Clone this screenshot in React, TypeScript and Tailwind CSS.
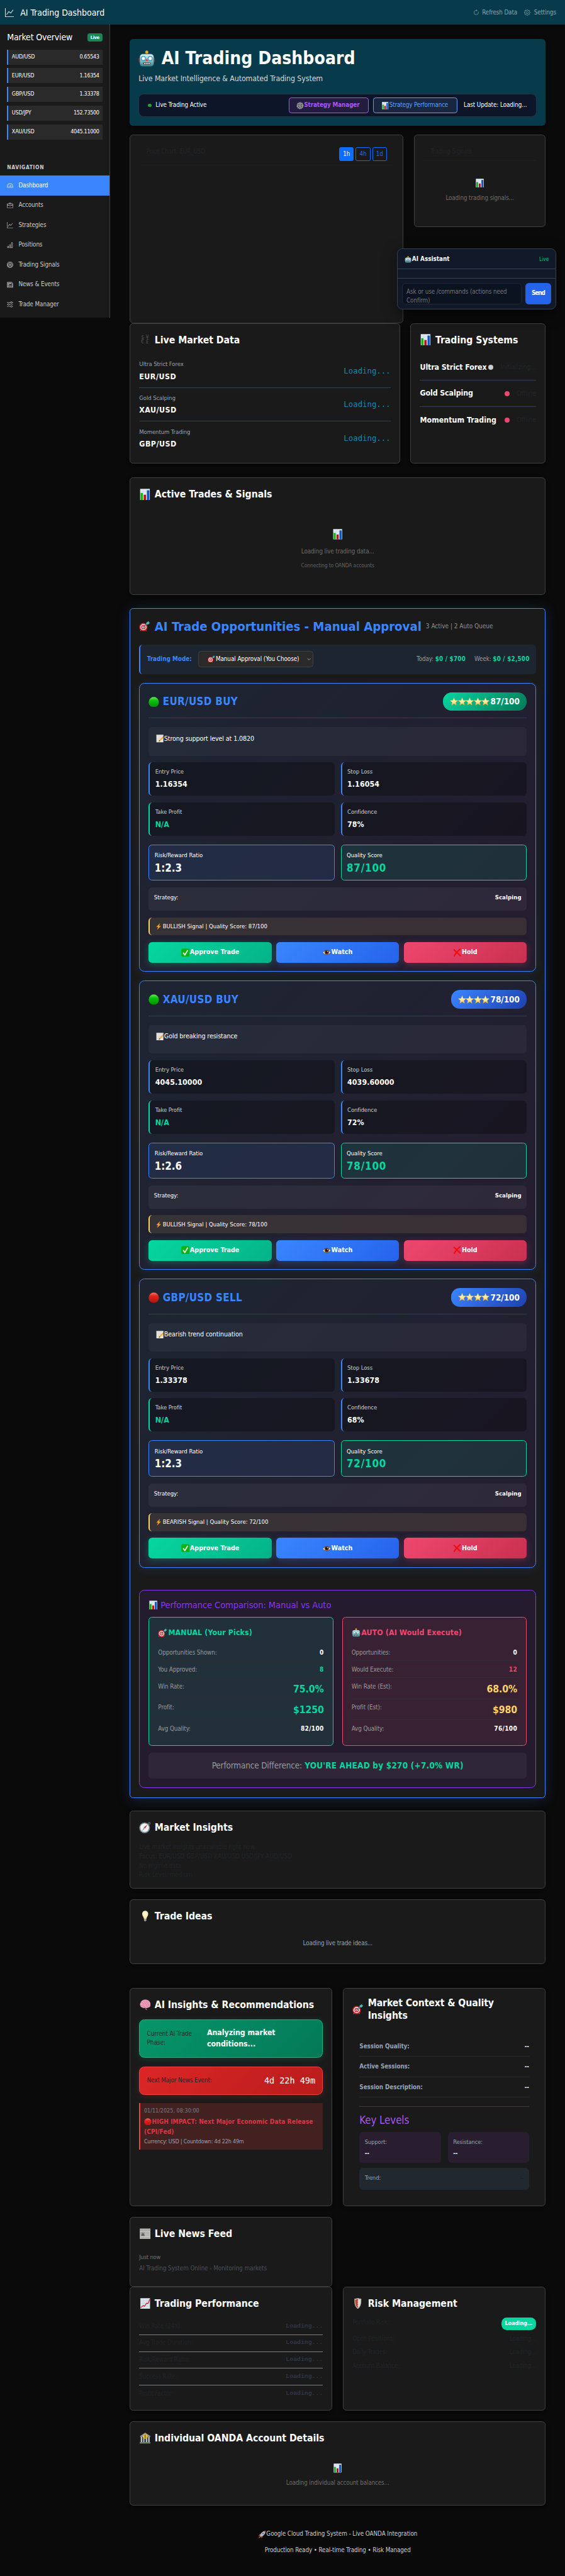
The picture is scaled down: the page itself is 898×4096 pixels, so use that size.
import type { ReactNode } from "react";
import {
  BsArrowClockwise,
  BsBarChart,
  BsBriefcase,
  BsBullseye,
  BsGear,
  BsGraphUp,
  BsNewspaper,
  BsSliders,
  BsSpeedometer2,
} from "react-icons/bs";

type IconProps = { className?: string };

function Svg({ className = "", children }: { className?: string; children: ReactNode }) {
  return (
    <svg viewBox="0 0 32 32" className={"shrink-0 " + className} fill="none">
      {children}
    </svg>
  );
}

function Robot({ className }: IconProps) {
  return (
    <Svg className={className}>
      <defs>
        <linearGradient id="robotFace" x1="0" y1="0" x2="0" y2="1">
          <stop offset="0" stopColor="#dff3f2" />
          <stop offset="0.5" stopColor="#8fc3c8" />
          <stop offset="1" stopColor="#2f7f88" />
        </linearGradient>
      </defs>
      <rect x="0.5" y="14" width="4" height="9" rx="2" fill="#c8202c" />
      <rect x="27.5" y="14" width="4" height="9" rx="2" fill="#c8202c" />
      <rect x="13" y="4" width="6" height="5" rx="1" fill="#4b6a9e" />
      <circle cx="16" cy="3.4" r="3" fill="#f7a61c" />
      <rect x="2.5" y="7" width="27" height="24" rx="6" fill="url(#robotFace)" stroke="#1d4b55" strokeWidth="0.8" />
      <circle cx="9.5" cy="15.5" r="4" fill="#fff" stroke="#1f9fd0" strokeWidth="1.6" />
      <circle cx="22.5" cy="15.5" r="4" fill="#fff" stroke="#1f9fd0" strokeWidth="1.6" />
      <path d="M16 15.5l2.8 5h-5.6z" fill="#d8453b" />
      <rect x="9.5" y="23" width="13" height="4.4" rx="1.6" fill="#3a2320" />
      <path d="M11 23.8h1.8v2.8H11zM14 23.8h1.8v2.8H14zM17 23.8h1.8v2.8H17zM20 23.8h1.6v2.8H20z" fill="#fff" />
    </Svg>
  );
}

function Cog({ className }: IconProps) {
  return (
    <Svg className={className}>
      <circle cx="16" cy="16" r="13.4" stroke="#9a9a9a" strokeWidth="4" strokeDasharray="3.4 3.6" />
      <circle cx="16" cy="16" r="10.4" stroke="#b9b9b9" strokeWidth="3.4" />
      <path d="M16 6v20M6 16h20M9 9l14 14M23 9L9 23" stroke="#8d8d8d" strokeWidth="1.8" />
      <circle cx="16" cy="16" r="5" fill="#6a6a6a" stroke="#c9c9c9" strokeWidth="2" />
    </Svg>
  );
}

function BarsEmoji({ className }: IconProps) {
  return (
    <Svg className={className}>
      <rect x="3" y="0.5" width="27" height="31" fill="#dfe9f3" />
      <path d="M3 8h27M3 15.500h27M3 23h27M11.500 .5v31M21 .5v31" stroke="#c3cfdb" strokeWidth="0.7" />
      <rect x="4.500" y="12" width="6" height="19.500" fill="#12b312" />
      <rect x="13" y="17" width="6.500" height="14.500" fill="#c40f12" />
      <rect x="22" y="4.500" width="6.500" height="27" fill="#0f55bd" />
    </Svg>
  );
}

function Target({ className }: IconProps) {
  return (
    <Svg className={className}>
      <path d="M5.500 25.500l-2 4.500M19 26l2 4" stroke="#b8791d" strokeWidth="2" />
      <circle cx="12.500" cy="18.500" r="12" fill="#cf1f26" />
      <circle cx="12.500" cy="18.500" r="9" fill="#fbf5f3" />
      <circle cx="12.500" cy="18.500" r="6.300" fill="#cf1f26" />
      <circle cx="12.500" cy="18.500" r="3.600" fill="#fbf5f3" />
      <circle cx="12.500" cy="18.500" r="1.600" fill="#cf1f26" />
      <path d="M13 18L26 6" stroke="#2c7f8a" strokeWidth="2" />
      <path d="M20.500 11l.5-5 7-5 .5 3.500 3.500.8-5.500 5.700z" fill="#4cb5be" />
    </Svg>
  );
}

function Ball({ className, tone }: IconProps & { tone: "green" | "red" }) {
  const green = tone === "green";
  const id = green ? "ballGreen" : "ballRed";
  return (
    <Svg className={className}>
      <defs>
        <linearGradient id={id} x1="0" y1="0" x2="0" y2="1">
          <stop offset="0" stopColor={green ? "#6be85f" : "#f4776a"} />
          <stop offset="0.35" stopColor={green ? "#0cc20c" : "#e0221a"} />
          <stop offset="1" stopColor={green ? "#008f00" : "#b31410"} />
        </linearGradient>
      </defs>
      <circle cx="16" cy="16" r="15.500" fill={"url(#" + id + ")"} />
    </Svg>
  );
}

function Star({ className }: IconProps) {
  return (
    <Svg className={className}>
      <defs>
        <linearGradient id="starFill" x1="0" y1="0" x2="0" y2="1">
          <stop offset="0" stopColor="#fff6c8" />
          <stop offset="0.6" stopColor="#fdeb9c" />
          <stop offset="1" stopColor="#eaa51c" />
        </linearGradient>
      </defs>
      <path d="M16 .5l4.300 10.600 11.200.8-8.600 7.300 2.700 11.600L16 24.600 6.400 30.800l2.700-11.600L.5 11.900l11.200-.8z" fill="url(#starFill)" stroke="#e9a427" strokeWidth="0.8" />
    </Svg>
  );
}

function Memo({ className }: IconProps) {
  return (
    <Svg className={className}>
      <rect x="1.500" y="1" width="28" height="30" fill="#eceae6" />
      <rect x="1.500" y="1" width="28" height="3" fill="#cfcdca" />
      <path d="M5 9h20M5 13h20M5 17h14M5 21h10M5 25h8" stroke="#c2c4c8" strokeWidth="1.200" />
      <path d="M11 28l2-6L26 9l4.500 4.500L17 26z" fill="#f2ae2e" />
      <path d="M26 9l2.500-2.500 4 4L30.500 13.500z" fill="#e0566a" />
      <path d="M11 28l2-6 4 4z" fill="#4a3b2a" />
    </Svg>
  );
}

function Bolt({ className }: IconProps) {
  return (
    <Svg className={className}>
      <path d="M22 0L5 18h8.500L8 32l18.500-18.500H17z" fill="#f9a91e" stroke="#d97c10" strokeWidth="0.800" />
    </Svg>
  );
}

function Check({ className }: IconProps) {
  return (
    <Svg className={className}>
      <rect x="0.500" y="0.500" width="31" height="31" rx="5" fill="#0cb314" />
      <path d="M7.500 16.500l6.500 8.500L25 6.500" stroke="#fff" strokeWidth="4" />
    </Svg>
  );
}

function Eye({ className }: IconProps) {
  return (
    <Svg className={className}>
      <path d="M0 17C5 6 26 5 32 16 26 28 7 28 0 17z" fill="#f1efed" stroke="#4b3a30" strokeWidth="2" />
      <circle cx="16" cy="15.500" r="9" fill="#6d3a1c" />
      <circle cx="16" cy="15.500" r="4.500" fill="#120b08" />
      <circle cx="19" cy="12" r="2" fill="#fff" />
    </Svg>
  );
}

function Cross({ className }: IconProps) {
  return (
    <Svg className={className}>
      <path d="M3 4c5 5 14 14 26 25M28 2C19 10 10 19 4 30" stroke="#f10a0a" strokeWidth="5" />
    </Svg>
  );
}

function Compass({ className }: IconProps) {
  return (
    <Svg className={className}>
      <circle cx="28.500" cy="4" r="2.600" stroke="#8c939b" strokeWidth="1.600" />
      <circle cx="15.500" cy="16.500" r="15" fill="#76808a" />
      <circle cx="15.500" cy="16.500" r="12.600" fill="#b9c0c7" />
      <circle cx="15.500" cy="16" r="11.400" fill="#f2f3f4" />
      <path d="M23 8l-5.500 9.500-4-2.800z" fill="#d92128" />
      <path d="M8 26l5.500-11.300 4 2.800z" fill="#9ca2a8" />
    </Svg>
  );
}

function Bulb({ className }: IconProps) {
  return (
    <Svg className={className}>
      <defs>
        <radialGradient id="bulbFill" cx="0.5" cy="0.400" r="0.600">
          <stop offset="0" stopColor="#fffef4" />
          <stop offset="1" stopColor="#f6dc8a" />
        </radialGradient>
      </defs>
      <path d="M16 .5c-5.500 0-8.800 4-8.800 9 0 5.500 4.300 8.500 5.300 14.500h7c1-6 5.300-9 5.300-14.500 0-5-3.300-9-8.800-9z" fill="url(#bulbFill)" />
      <rect x="12.500" y="24" width="7" height="6" rx="1.500" fill="#a9adb0" />
      <path d="M14 31h4" stroke="#6b6f72" strokeWidth="1.500" />
    </Svg>
  );
}

function Brain({ className }: IconProps) {
  return (
    <Svg className={className}>
      <path d="M17 24c2 3 4 4 5 7.500h-3.500L15 25z" fill="#b8577c" />
      <path d="M8 24C1 23-1 14 3 9 5 3 12 0 17 1c8 0 14 6 14.500 13 .5 6-2.500 10-7.500 10-3 2-6 2-8 0-3 1.500-6 1.500-8 0z" fill="#ee9fbd" />
      <path d="M5 10c4-1 6 1 6 4M12 3c-1 4 2 5 4 5M20 3c-2 4 1 7 5 6M3 18c4 2 7 0 9-2M15 12c3 0 5 3 4 6M22 13c4-1 6 2 5 6M9 22c2-2 5-3 7-1M20 22c1-2 3-3 5-2" stroke="#c66c92" strokeWidth="1.400" strokeLinecap="round" />
    </Svg>
  );
}

function Paper({ className }: IconProps) {
  return (
    <Svg className={className}>
      <rect x="0.500" y="1" width="31" height="30" fill="#c5c5c3" />
      <rect x="3" y="3" width="26" height="5" fill="#8f8f8d" />
      <path d="M5 5.500h22" stroke="#e6e6e4" strokeWidth="1.800" strokeDasharray="3 1.200" />
      <rect x="3" y="11" width="13" height="12" fill="#9b9b99" />
      <path d="M4 22l5-9 6 9z" fill="#5d5d5b" />
      <path d="M18 12h11M18 15h11M18 18h11M18 21h11M3 26h26M3 29h26" stroke="#979795" strokeWidth="1.200" />
    </Svg>
  );
}

function TrendEmoji({ className }: IconProps) {
  return (
    <Svg className={className}>
      <rect x="2" y="0.500" width="28" height="31" fill="#dbe5ee" />
      <path d="M2 8h28M2 15.500h28M2 23h28M11 .5v31M21 .5v31" stroke="#bdcad6" strokeWidth="0.800" />
      <path d="M3 28l7-6 4 2 6-9 4 1 5.500-13" stroke="#cc1c20" strokeWidth="2.200" />
    </Svg>
  );
}

function Shield({ className }: IconProps) {
  return (
    <Svg className={className}>
      <path d="M16 0c4 1.500 7 2 10 2 0 14 0 22-10 30C6 24 6 16 6 2c3 0 6-.5 10-2z" fill="#b9b4b0" />
      <path d="M16 3c3 1 5 1.500 7.500 1.500C23.500 15 23.500 22 16 28.500z" fill="#e2dfdc" />
      <path d="M16 3c-3 1-5 1.500-7.500 1.500C8.500 15 8.500 22 16 28.500l1-4-2.500-3 2.500-3-2.500-3 2.500-3-2.500-3 2.500-3z" fill="#c8402f" />
    </Svg>
  );
}

function Bank({ className }: IconProps) {
  return (
    <Svg className={className}>
      <path d="M16 0l15 10v2.500H1V10z" fill="#8d9aa0" />
      <path d="M3 12.500h4.500V28H3zM10 12.500h4V28h-4zM18 12.500h4V28h-4zM24.500 12.500H29V28h-4.500z" fill="#b7c2c6" />
      <path d="M14 17h4v11h-4z" fill="#2c4b66" />
      <path d="M0 28h32v3.500H0z" fill="#84936f" />
      <circle cx="16" cy="11" r="7" fill="#f0c832" stroke="#a9861a" strokeWidth="0.800" />
      <path d="M18.500 8.500c-1.500-1.500-5-1-5 .8 0 2.200 5 1.200 5 3.400 0 1.800-3.500 2.300-5 .8M16 6.300v9.400" stroke="#5c480c" strokeWidth="1.200" />
    </Svg>
  );
}

function Rocket({ className }: IconProps) {
  return (
    <Svg className={className}>
      <path d="M8 20l-7 3 5-9 6-1zM13 25l-2 6 8-5 1-6z" fill="#b92c25" />
      <path d="M8 22l-6 9 9-6z" fill="#f7a71d" />
      <path d="M7 20C12 8 20 1 31 .5 31 11 24 20 12.500 25z" fill="#a9b4bd" />
      <path d="M24 1.800C26 1 28.500.6 31 .5c0 2.500-.4 5-1.200 7z" fill="#c63a31" />
      <circle cx="20.500" cy="11.500" r="3.400" fill="#2b4a70" stroke="#e6ebee" strokeWidth="1.200" />
    </Svg>
  );
}

function Currencies() {
  return (
    <span className="grid h-[22px] w-[22px] shrink-0 grid-cols-2 place-items-center text-[12px] leading-[11px] font-normal text-[#505050]">
      <span>$</span>
      <span>¥</span>
      <span>€</span>
      <span>£</span>
    </span>
  );
}

function Panel({ className = "", children }: { className?: string; children?: ReactNode }) {
  return (
    <section className={"flex flex-col rounded-lg border border-[#404040] bg-[#1a1a1a] px-5 pt-5 shadow-[0_2px_8px_rgba(0,0,0,0.4)] " + className}>
      {children}
    </section>
  );
}

function Heading({ icon, children }: { icon: ReactNode; children: ReactNode }) {
  return (
    <h2 className="flex h-[34px] shrink-0 items-center gap-[9px] text-[22.400px] font-bold tracking-[-0.002em] text-white">
      <span className="flex w-[26px] shrink-0 justify-center">{icon}</span>
      <span className="whitespace-nowrap">{children}</span>
    </h2>
  );
}

const quotes = [
  ["AUD/USD", "0.65543"],
  ["EUR/USD", "1.16354"],
  ["GBP/USD", "1.33378"],
  ["USD/JPY", "152.73500"],
  ["XAU/USD", "4045.11000"],
];

const navItems = [
  { label: "Dashboard", Icon: BsSpeedometer2 },
  { label: "Accounts", Icon: BsBriefcase },
  { label: "Strategies", Icon: BsGraphUp },
  { label: "Positions", Icon: BsBarChart },
  { label: "Trading Signals", Icon: BsBullseye },
  { label: "News & Events", Icon: BsNewspaper },
  { label: "Trade Manager", Icon: BsSliders },
];

function TopBar() {
  return (
    <header className="flex h-14 items-center justify-between bg-[#073b4c] pr-5 pl-3 shadow-[0_2px_8px_rgba(0,0,0,0.5)]">
      <div className="flex items-center gap-[14px] pt-[2px] text-[20px] tracking-[-0.003em] text-white">
        <BsGraphUp className="h-5 w-5" />
        <span>AI Trading Dashboard</span>
      </div>
      <div className="flex items-center pt-[2px] text-[14px] text-[#8ba5ae]">
        <BsArrowClockwise className="mr-[7px] h-[14px] w-[14px]" />
        <span className="mr-4">Refresh Data</span>
        <BsGear className="mr-2 h-[14px] w-[14px]" />
        <span>Settings</span>
      </div>
    </header>
  );
}

function Sidebar() {
  return (
    <aside className="h-[664px] w-[250px] shrink-0 border-r border-[#404040] bg-[#1a1a1a]">
      <div className="flex h-[56px] items-center justify-between px-4 pt-[2px]">
        <span className="text-[20px] tracking-[-0.013em] text-white">Market Overview</span>
        <span className="flex h-[18px] w-[35px] items-center justify-center rounded-[5px] bg-[#198754] text-[10.500px] font-bold tracking-[-0.03em] text-white">
          Live
        </span>
      </div>
      <div className="flex flex-col gap-2 px-4">
        {quotes.map(([pair, price]) => (
          <div key={pair} className="flex h-[34.400px] items-center justify-between border-l-[3px] border-[#3a86ff] bg-[#2a2a2a] px-2 text-[12.800px] text-white">
            <span className="tracking-[-0.018em]">{pair}</span>
            <span className="tracking-[-0.038em]">{price}</span>
          </div>
        ))}
      </div>
      <div className="flex h-[82px] items-end px-4 pb-[9px] text-[12px] font-bold tracking-[0.077em] text-[#ccc]">NAVIGATION</div>
      <nav>
        {navItems.map(({ label, Icon }, i) => (
          <a
            key={label}
            className={
              "flex h-[45px] items-center gap-3 px-4 text-[14px] " +
              (i === 0 ? "bg-[#3a86ff] text-white" : "text-[#ccc]")
            }
          >
            <Icon className="h-[14px] w-[14px]" />
            <span>{label}</span>
          </a>
        ))}
      </nav>
    </aside>
  );
}

function Hero() {
  return (
    <section className="h-[197px] rounded-lg bg-[#073b4c] px-5 pt-[20px] shadow-[0_2px_8px_rgba(0,0,0,0.4)]">
      <h1 className="flex h-[50px] items-center gap-[14px] text-[40px] font-bold tracking-[0.002em] text-white">
        <Robot className="h-[38px] w-[38px]" />
        AI Trading Dashboard
      </h1>
      <p className="mt-[8px] h-[28px] text-[17.600px] leading-[28px] text-[#d5d8d9]">
        Live Market Intelligence &amp; Automated Trading System
      </p>
      <div className="mt-[19px] flex h-[52px] items-center rounded-xl border border-[#263448] bg-[#0d1628] pr-[21px] pl-5 text-[14px] text-white">
        <span className="mr-[9px] h-2 w-2 rounded-full bg-[#2a9d3f]" />
        <span>Live Trading Active</span>
        <button className="ml-auto flex h-[35px] w-[182px] items-center rounded-md border border-[#a855f7] bg-[#221d3f] pl-4 font-bold text-[#a855f7]">
          <Cog className="mr-[1px] h-[17px] w-[17px]" />
          Strategy Manager
        </button>
        <button className="mr-[15px] ml-[10px] flex h-[35px] w-[190px] items-center rounded-md border border-[#5ea0f5] bg-[#18263f] pl-[17px] tracking-[-0.016em] text-[#5ea0f5]">
          <BarsEmoji className="mr-[1px] h-[17px] w-[17px]" />
          Strategy Performance
        </button>
        <span className="tracking-[-0.008em]">Last Update: Loading...</span>
      </div>
    </section>
  );
}

function ChartRow() {
  return (
    <div className="mt-5 flex items-start gap-6">
      <section className="h-[427px] w-[620px] rounded-lg border border-[#404040] bg-[#1a1a1a] px-[23px] pt-[14px]">
        <div className="flex h-[54px] items-center justify-between border-b border-[#1e1e1e] px-[13px] text-[14px]">
          <span className="pb-[4px] text-[#212529]">Price Chart: EUR_USD</span>
          <div className="flex gap-[4px] pt-[5px]">
            <button className="h-[32px] w-[33.500px] rounded-[4px] border border-[#0d6efd] bg-[#0d6efd] text-white">1h</button>
            <button className="h-[32px] w-[33.500px] rounded-[4px] border border-[#0d6efd] text-[#0d6efd]">4h</button>
            <button className="h-[32px] w-[33.500px] rounded-[4px] border border-[#0d6efd] text-[#0d6efd]">1d</button>
          </div>
        </div>
      </section>
      <section className="h-[210px] w-[298px] rounded-lg border border-[#404040] bg-[#1a1a1a] px-[20px] pt-[20px]">
        <div className="flex h-[38px] items-center border-b border-[#1e1e1e] pl-[16px] text-[14px] text-[#212529]">Trading Signals</div>
        <div className="flex flex-col items-center pt-[40px]">
          <BarsEmoji className="h-[21px] w-[21px]" />
          <span className="mt-[14px] text-[14px] leading-[21px] text-[#6e6e6e]">Loading trading signals...</span>
        </div>
      </section>
    </div>
  );
}

const marketRows = [
  ["Ultra Strict Forex", "EUR/USD"],
  ["Gold Scalping", "XAU/USD"],
  ["Momentum Trading", "GBP/USD"],
];

function MarketRow() {
  return (
    <div className="flex gap-6">
      <Panel className="h-[319px] w-[612px]">
        <Heading icon={<Currencies />}>Live Market Data</Heading>
        <div className="mt-4">
          {marketRows.map(([name, pair], i) => (
            <div key={pair} className={"flex h-[76px] items-center justify-between " + (i < 2 ? "border-b border-[#334155]" : "")}>
              <div>
                <div className="text-[13.600px] leading-[28px] text-[#94a3b8]">{name}</div>
                <div className="text-[17.600px] leading-[30px] font-bold tracking-[0.04em] text-white">{pair}</div>
              </div>
              <span className="font-['DejaVu_Sans_Mono'] text-[17.600px] tracking-normal text-[#118ab2]">Loading...</span>
            </div>
          ))}
        </div>
      </Panel>
      <Panel className="h-[319px] w-[306px]">
        <Heading icon={<BarsEmoji className="h-[26px] w-[26px]" />}>Trading Systems</Heading>
        <div className="mt-4 text-[17.600px]">
          <div className="flex h-[59.500px] items-center border-b border-[#334155]">
            <span className="font-bold whitespace-nowrap text-white">Ultra Strict Forex</span>
            <span className="ml-auto h-3 w-3 shrink-0 rounded-full bg-[#ccc]" />
            <span className="ml-4 text-[15.200px] text-[#212529]">Initializing...</span>
          </div>
          <div className="flex h-[59.500px] items-center border-b border-[#334155]">
            <span className="font-bold text-white">Gold Scalping</span>
            <span className="ml-auto h-3 w-3 rounded-full bg-[#ef476f]" />
            <span className="ml-4 text-[15.200px] text-[#212529]">Offline</span>
          </div>
          <div className="flex h-[59.500px] items-center">
            <span className="font-bold tracking-[0.002em] text-white">Momentum Trading</span>
            <span className="ml-auto h-3 w-3 rounded-full bg-[#ef476f]" />
            <span className="ml-4 text-[15.200px] text-[#212529]">Offline</span>
          </div>
        </div>
      </Panel>
    </div>
  );
}

type Opportunity = {
  title: string;
  tone: "green" | "red";
  stars: number;
  score: number;
  note: string;
  entry: string;
  stop: string;
  confidence: string;
  ratio: string;
  signal: string;
};

const opportunities: Opportunity[] = [
  { title: "EUR/USD BUY", tone: "green", stars: 5, score: 87, note: "Strong support level at 1.0820", entry: "1.16354", stop: "1.16054", confidence: "78%", ratio: "1:2.3", signal: "BULLISH" },
  { title: "XAU/USD BUY", tone: "green", stars: 4, score: 78, note: "Gold breaking resistance", entry: "4045.10000", stop: "4039.60000", confidence: "72%", ratio: "1:2.6", signal: "BULLISH" },
  { title: "GBP/USD SELL", tone: "red", stars: 4, score: 72, note: "Bearish trend continuation", entry: "1.33378", stop: "1.33678", confidence: "68%", ratio: "1:2.3", signal: "BEARISH" },
];

function Metric({ label, value, green }: { label: string; value: string; green?: boolean }) {
  return (
    <div className={"h-[75.700px] rounded-lg border-l-[3px] bg-black/30 pt-[10px] pl-3 " + (green ? "border-[#06d6a0]" : "border-[#3a86ff]")}>
      <div className="text-[13.600px] leading-[24px] text-[#ccc]">{label}</div>
      <div className={"mt-[3px] text-[17.600px] leading-[28px] font-bold tracking-[0.007em] " + (green ? "text-[#06d6a0]" : "text-white")}>{value}</div>
    </div>
  );
}

function OpportunityCard({ o }: { o: Opportunity }) {
  return (
    <article className="h-[655.300px] rounded-xl border border-[#3a86ff] bg-[linear-gradient(135deg,rgba(58,134,255,0.1),rgba(131,56,236,0.1))] px-5 pt-5 shadow-[0_4px_20px_rgba(58,134,255,0.15)]">
      <div className="flex h-[59px] items-start justify-between border-b-2 border-[#3a86ff]/30">
        <h3 className="flex h-[44px] items-center gap-2 text-[24px] font-bold tracking-[0.02em] text-[#3a86ff]">
          <Ball tone={o.tone} className="h-[24px] w-[24px]" />
          {o.title}
        </h3>
        <div
          className={
            "flex h-[42px] items-center rounded-[20px] pr-4 pl-[15px] text-[19.200px] font-bold tracking-[-0.003em] text-white " +
            (o.stars === 5
              ? "bg-[linear-gradient(135deg,#06d6a0,#047857)]"
              : "bg-[linear-gradient(135deg,#3a86ff,#1e40af)]")
          }
        >
          {Array.from({ length: o.stars }, (_, i) => (
            <Star key={i} className="-mr-[0.600px] h-[18.600px] w-[18.600px]" />
          ))}
          <span className="ml-[2px]">{o.score}/100</span>
        </div>
      </div>
      <div className="mt-5 flex h-[65px] items-start gap-[1px] rounded-lg bg-white/[0.04] pt-[15px] pl-4 text-[15.200px] leading-[24px] text-white">
        <Memo className="mt-[2px] h-[18px] w-[18px]" />
        {o.note}
      </div>
      <div className="mt-[15px] grid grid-cols-2 gap-x-[14px] gap-y-[15px]">
        <Metric label="Entry Price" value={o.entry} />
        <Metric label="Stop Loss" value={o.stop} />
        <Metric label="Take Profit" value="N/A" green />
        <Metric label="Confidence" value={o.confidence} />
      </div>
      <div className="mt-5 grid grid-cols-2 gap-x-[14px] text-[13.600px] tracking-[-0.005em] text-white">
        <div className="h-[82px] rounded-lg border border-[#3a86ff] bg-[#3a86ff]/10 pt-[12px] pl-3">
          <div className="leading-[22px]">Risk/Reward Ratio</div>
          <div className="text-[24px] leading-[36px] font-bold">{o.ratio}</div>
        </div>
        <div className="h-[82px] rounded-lg border border-[#06d6a0] bg-[#06d6a0]/10 pt-[12px] pl-3">
          <div className="leading-[22px]">Quality Score</div>
          <div className="text-[24px] leading-[36px] font-bold tracking-[0.048em] text-[#06d6a0]">{o.score}/100</div>
        </div>
      </div>
      <div className="mt-[15px] flex h-[53px] items-start justify-between rounded-lg bg-white/5 px-3 pt-3 text-[13.600px] leading-[22px] tracking-[-0.004em] text-white">
        <span>Strategy:</span>
        <span className="font-bold tracking-[0.01em]">Scalping</span>
      </div>
      <div className="mt-[15px] flex h-[41px] items-center gap-[2px] rounded-lg border-l-[3px] border-[#ffd166] bg-[#ffd166]/10 pl-3 text-[13.600px] tracking-[-0.001em] text-white">
        <Bolt className="h-[15px] w-[15px]" />
        <span>
          {o.signal} Signal | Quality Score: {o.score}/100
        </span>
      </div>
      <div className="mt-[15px] grid grid-cols-3 gap-[10px] text-[15.200px] font-bold tracking-normal text-white">
        <button className="flex h-[47px] items-center justify-center rounded-lg bg-[linear-gradient(135deg,#06d6a0,#05b388)] shadow-[0_4px_15px_rgba(6,214,160,0.3)]">
          <Check className="mr-[1px] h-[19px] w-[19px]" />
          Approve Trade
        </button>
        <button className="flex h-[47px] items-center justify-center rounded-lg bg-[linear-gradient(135deg,#3a86ff,#2563eb)] shadow-[0_4px_15px_rgba(58,134,255,0.3)]">
          <Eye className="mr-[1px] h-[18px] w-[18px]" />
          Watch
        </button>
        <button className="flex h-[47px] items-center justify-center rounded-lg bg-[linear-gradient(135deg,#ef476f,#c9304f)] shadow-[0_4px_15px_rgba(239,71,111,0.3)]">
          <Cross className="mr-[1px] h-[19px] w-[19px]" />
          Hold
        </button>
      </div>
    </article>
  );
}

type CompareRow = { label: string; value: string; color?: string; large?: boolean };

function CompareBox({ tone, title, icon, rows }: { tone: "manual" | "auto"; title: string; icon: ReactNode; rows: CompareRow[] }) {
  const manual = tone === "manual";
  return (
    <div className={"h-[292.500px] rounded-lg border px-5 pt-5 " + (manual ? "border-[#06d6a0] bg-[#22303a]" : "border-[#ef476f] bg-[#392134]")}>
      <h4 className={"mb-[13px] flex h-7 items-center gap-[2px] text-[17.600px] font-bold tracking-[0.009em] " + (manual ? "text-[#06d6a0]" : "text-[#ef476f]")}>
        {icon}
        {title}
      </h4>
      {rows.map((r, i) => (
        <div
          key={r.label}
          className={
            "flex items-start justify-between pt-2 text-[14px] leading-[22px] " +
            (r.large ? "h-12 " : "h-[38px] ") +
            (i < rows.length - 1 ? "border-b border-[#2d2d33]" : "")
          }
        >
          <span className="text-[#999]">{r.label}</span>
          <span className={"font-bold " + (r.large ? "text-[22.400px] leading-[34px] tracking-[-0.005em] " : "text-[14.400px] tracking-[0.03em] ") + (r.color ?? "text-white")}>
            {r.value}
          </span>
        </div>
      ))}
    </div>
  );
}

function Comparison() {
  return (
    <section className="mt-[50px] h-[448.500px] rounded-xl border border-[#8338ec] bg-[#241b2e] px-5 pt-5">
      <h3 className="flex h-[26px] items-center gap-[6px] text-[20.800px] text-[#8338ec]">
        <BarsEmoji className="h-[21px] w-[21px]" />
        Performance Comparison: Manual vs Auto
      </h3>
      <div className="mt-[14px] grid grid-cols-2 gap-5">
        <CompareBox
          tone="manual"
          title="MANUAL (Your Picks)"
          icon={<Target className="h-[21px] w-[21px]" />}
          rows={[
            { label: "Opportunities Shown:", value: "0" },
            { label: "You Approved:", value: "8", color: "text-[#06d6a0]" },
            { label: "Win Rate:", value: "75.0%", color: "text-[#06d6a0]", large: true },
            { label: "Profit:", value: "$1250", color: "text-[#06d6a0]", large: true },
            { label: "Avg Quality:", value: "82/100" },
          ]}
        />
        <CompareBox
          tone="auto"
          title="AUTO (AI Would Execute)"
          icon={<Robot className="h-[20px] w-[20px]" />}
          rows={[
            { label: "Opportunities:", value: "0" },
            { label: "Would Execute:", value: "12", color: "text-[#ef476f]" },
            { label: "Win Rate (Est):", value: "68.0%", color: "text-[#ffd166]", large: true },
            { label: "Profit (Est):", value: "$980", color: "text-[#ffd166]", large: true },
            { label: "Avg Quality:", value: "76/100" },
          ]}
        />
      </div>
      <div className="mt-[15px] flex h-[59px] items-center justify-center gap-[6px] rounded-lg bg-white/5 text-[19.200px] tracking-[-0.013em] text-[#999]">
        <span>Performance Difference:</span>
        <span className="font-bold tracking-[0.016em] text-[#06d6a0]">YOU'RE AHEAD by $270 (+7.0% WR)</span>
      </div>
    </section>
  );
}

function Opportunities() {
  return (
    <section className="mt-[30px] h-[2695.500px] rounded-lg border-2 border-[#3a86ff] bg-[#1a1a1a] px-5 pt-5 shadow-[0_4px_30px_rgba(58,134,255,0.2)]">
      <div className="flex h-[38px] items-center">
        <Target className="mr-[10px] h-[25px] w-[25px]" />
        <h2 className="text-[28.800px] font-bold tracking-[-0.001em] text-[#3a86ff]">AI Trade Opportunities - Manual Approval</h2>
        <span className="ml-[10px] text-[14.400px] tracking-[-0.006em] text-[#8f8f8f]">3 Active | 2 Auto Queue</span>
      </div>
      <div className="mt-[22px] flex h-[67px] items-center rounded-lg border-l-4 border-[#3a86ff] bg-[#1d2530] px-[15px] text-[14px] text-[#999]">
        <span className="mr-[15px] font-bold tracking-normal text-[#3a86ff]">Trading Mode:</span>
        <div className="flex h-[37px] w-[260px] items-center gap-[1px] rounded-md border border-[#404040] bg-[#2a2a2a] pr-1 pl-5 tracking-[-0.006em] text-white">
          <Target className="h-[17px] w-[17px]" />
          <span className="whitespace-nowrap">Manual Approval (You Choose)</span>
          <svg viewBox="0 0 10 10" className="ml-auto h-[9px] w-[9px]" fill="none" stroke="#a0a0a0" strokeWidth="1.500">
            <path d="M1 3l4 4 4-4" />
          </svg>
        </div>
        <span className="ml-auto">
          Today: <b className="tracking-[0.024em] text-[#06d6a0]">$0 / $700</b>
        </span>
        <span className="ml-5">
          Week: <b className="tracking-[0.024em] text-[#06d6a0]">$0 / $2,500</b>
        </span>
      </div>
      <div className="mt-5 flex flex-col gap-5">
        {opportunities.map((o) => (
          <OpportunityCard key={o.title} o={o} />
        ))}
      </div>
      <Comparison />
    </section>
  );
}

function AiInsights() {
  return (
    <Panel className="h-[494.500px]">
      <Heading icon={<Brain className="h-[25px] w-[25px]" />}>AI Insights &amp; Recommendations</Heading>
      <div className="mt-4 flex h-[87.500px] items-center rounded-xl border border-[#10b981] bg-[linear-gradient(135deg,#059669,#047857)] px-4 shadow-[0_4px_15px_rgba(16,185,129,0.2)]">
        <span className="w-[136px] shrink-0 pr-6 text-[14px] leading-[21px] tracking-normal text-[#212529]">Current AI Trade Phase:</span>
        <span className="text-[17.600px] leading-[26.400px] font-bold tracking-[-0.003em] text-white">
          Analyzing market
          <br />
          conditions...
        </span>
      </div>
      <div className="mt-[19.500px] flex h-[64px] items-center justify-between rounded-xl border border-[#ef4444] bg-[linear-gradient(135deg,#dc2626,#b91c1c)] px-4 shadow-[0_4px_15px_rgba(239,68,68,0.2)]">
        <span className="text-[14px] text-[#212529]">Next Major News Event:</span>
        <span className="font-['DejaVu_Sans_Mono'] text-[19.200px] tracking-normal text-white">4d 22h 49m</span>
      </div>
      <div className="mt-[19px] h-[105px] border-l-[3px] border-[#ef4444] bg-[#442121] pt-[7px] pl-2">
        <div className="text-[12.800px] leading-[22px] tracking-normal text-[#777e85]">01/11/2025, 08:30:00</div>
        <div className="mt-[3px] text-[14.400px] leading-[22px] font-bold tracking-[0.009em] whitespace-nowrap text-[#dc3545]">
          <Ball tone="red" className="mr-[1px] inline-block h-[17px] w-[17px] align-[-3px]" />
          HIGH IMPACT: Next Major Economic Data Release
          <br />
          (CPI/Fed)
        </div>
        <div className="text-[12.800px] leading-[24px] tracking-[-0.022em] text-[#94a3b8]">Currency: USD | Countdown: 4d 22h 49m</div>
      </div>
    </Panel>
  );
}

function MarketContext() {
  return (
    <section className="h-[494.500px] rounded-lg border border-[#404040] bg-[#1a1a1a] px-5 pt-[19px] shadow-[0_2px_8px_rgba(0,0,0,0.4)]">
      <h2 className="flex items-center gap-[9px] text-[22.400px] leading-[28px] font-bold tracking-[-0.006em] text-white">
        <span className="w-[26px]">
          <Target className="h-[25px] w-[25px]" />
        </span>
        <span>
          Market Context &amp; Quality
          <br />
          Insights
        </span>
      </h2>
      <div className="mt-[34px] px-4">
        {["Session Quality:", "Active Sessions:", "Session Description:"].map((label) => (
          <div key={label} className="flex h-[46px] items-center justify-between border-b border-[#2a2a2a] pt-[2px] text-[14px] font-bold">
            <span className="tracking-[-0.008em] text-[#94a3b8]">{label}</span>
            <span className="text-[#e2e8f0]">--</span>
          </div>
        ))}
        <div className="mt-5 border-t-2 border-[#452b63] pt-4">
          <h3 className="h-[30px] text-[24px] leading-[30px] text-[#a855f7]">Key Levels</h3>
          <div className="mt-[11px] grid grid-cols-2 gap-4">
            {["Support:", "Resistance:"].map((label) => (
              <div key={label} className="h-[70px] rounded-lg bg-[#281e30] px-3 pt-3 text-[13.300px] leading-[22px] text-[#94a3b8]">
                {label}
                <div className="mt-1 text-[14px] font-bold text-[#e2e8f0]">--</div>
              </div>
            ))}
          </div>
          <div className="mt-3 flex h-[49px] items-center justify-between rounded-lg bg-[#212830] px-3 pb-[3px] text-[13.600px] text-[#94a3b8]">
            <span>Trend:</span>
            <span className="text-[#15191d]">--</span>
          </div>
        </div>
      </div>
    </section>
  );
}

function Assistant() {
  return (
    <section className="absolute top-[563px] left-[900px] h-[138px] w-[360px] rounded-xl border border-[#334155] bg-[#111827] shadow-[0_10px_30px_rgba(0,0,0,0.5)]">
      <div className="flex h-[46px] items-center border-b border-[#334155] px-[15px] pt-[2px] text-[14px] font-bold tracking-[0.001em] text-white">
        <Robot className="mr-[1px] h-[16px] w-[16px]" />
        AI Assistant
        <span className="ml-auto text-[12px] font-normal text-[#10b981]">Live</span>
      </div>
      <div className="h-[21px] border-b border-[#334155]" />
      <div className="flex gap-2 px-[10px] pt-[10px]">
        <div className="h-[48px] w-[272px] overflow-hidden rounded-lg border border-[#1e293b] bg-[#0b1220] px-2 pt-[8px] text-[14px] leading-[21px] whitespace-nowrap text-[#757575]">
          Ask or use /commands (actions need
          <br />
          Confirm)
        </div>
        <button className="h-[48px] w-[59px] rounded-lg bg-[#2563eb] text-[14px] font-semibold tracking-[-0.1em] text-white">Send</button>
      </div>
    </section>
  );
}

const performanceRows = ["Win Rate (24h):", "Avg Trade Duration:", "Risk/Reward Ratio:", "Success Rate:", "Profit Factor:"];

export default function App() {
  return (
    <div className="h-[4096px] w-full overflow-hidden bg-[#0a0a0a]">
      <div className="relative h-[5838px] w-[1280px] bg-[#0a0a0a] font-['DejaVu_Sans_Condensed','DejaVu_Sans',sans-serif] tracking-[-0.01em] [zoom:0.7016]">
        <TopBar />
        <div className="flex">
          <Sidebar />
          <main className="ml-[44px] w-[942px] pt-8">
            <Hero />
            <ChartRow />
            <MarketRow />

            <Panel className="mt-[30.500px] h-[267.500px]">
              <Heading icon={<BarsEmoji className="h-[26px] w-[26px]" />}>Active Trades &amp; Signals</Heading>
              <div className="flex flex-col items-center pt-[62px] text-[#6b6b6b]">
                <BarsEmoji className="h-[24px] w-[24px]" />
                <span className="mt-[16px] text-[14px] leading-[24px]">Loading live trading data...</span>
                <span className="mt-[8px] text-[12px] leading-[20px] text-[#626262]">Connecting to OANDA accounts</span>
              </div>
            </Panel>

            <Opportunities />

            <Panel className="mt-[29.500px] h-[177px]">
              <Heading icon={<Compass className="h-[26px] w-[26px]" />}>Market Insights</Heading>
              <div className="mt-[17px] text-[14px] leading-[21px] text-[#212529]">
                <p>Live market insights unavailable right now.</p>
                <p className="tracking-[0.009em]">Focus: EUR/USD GBP/USD XAU/USD USD/JPY AUD/USD</p>
                <p>No regime data</p>
                <p>Risk Level: medium</p>
              </div>
            </Panel>

            <Panel className="mt-6 h-[146px]">
              <Heading icon={<Bulb className="h-[25px] w-[25px]" />}>Trade Ideas</Heading>
              <p className="mt-[34px] text-center text-[14px] leading-[21px] tracking-[-0.015em] text-[#94a3b8]">Loading live trade ideas...</p>
            </Panel>

            <div className="mt-[54px] grid grid-cols-2 gap-6">
              <AiInsights />
              <MarketContext />
            </div>

            <Panel className="mt-[24.500px] h-[158px] w-[459px]">
              <Heading icon={<Paper className="h-[25px] w-[25px]" />}>Live News Feed</Heading>
              <p className="mt-[25px] text-[13px] leading-[24px] text-[#6c757d]">Just now</p>
              <p className="text-[14px] leading-[26px] tracking-[-0.006em] text-[#495057]">AI Trading System Online - Monitoring markets</p>
            </Panel>

            <div className="grid grid-cols-2 gap-6">
              <Panel className="h-[281px]">
                <Heading icon={<TrendEmoji className="h-[25px] w-[25px]" />}>Trading Performance</Heading>
                <div className="mt-[17px]">
                  {performanceRows.map((label, i) => (
                    <div key={label} className={"flex h-[38px] items-center justify-between text-[14px] " + (i < 4 ? "border-b-2 border-[#808080]" : "")}>
                      <span className="text-[#212529]">{label}</span>
                      <span className="font-['Liberation_Mono'] text-[14px] font-bold tracking-normal text-[#2d3748]">Loading...</span>
                    </div>
                  ))}
                </div>
              </Panel>
              <Panel className="h-[281px]">
                <Heading icon={<Shield className="h-[25px] w-[25px]" />}>Risk Management</Heading>
                <div className="mt-[15px] flex h-[28px] items-start justify-between text-[14px] text-[#212529]">
                  <span className="pt-[2px]">Portfolio Risk:</span>
                  <span className="flex h-[28px] items-center rounded-xl bg-[#06d6a0] px-2 text-[12.800px] font-bold tracking-[-0.015em] text-white">Loading...</span>
                </div>
                {["Open Positions:", "Daily Trades:", "Account Balance:"].map((label) => (
                  <div key={label} className="mt-[10px] flex h-[21px] items-center justify-between text-[14px] text-[#212529]">
                    <span>{label}</span>
                    <span>Loading...</span>
                  </div>
                ))}
              </Panel>
            </div>

            <Panel className="mt-[24.500px] h-[190.500px]">
              <Heading icon={<Bank className="h-[25px] w-[25px]" />}>Individual OANDA Account Details</Heading>
              <div className="flex flex-col items-center pt-[40px] text-[#6b6b6b]">
                <BarsEmoji className="h-[21px] w-[21px]" />
                <span className="mt-[14px] text-[14px] leading-[21px] tracking-[-0.014em]">Loading individual account balances...</span>
              </div>
            </Panel>

            <footer className="flex flex-col items-center pt-[54px] text-[14px] leading-[24px] text-[#ccc]">
              <p className="flex items-center gap-[1px] tracking-[-0.006em]">
                <Rocket className="h-[18px] w-[18px]" />
                Google Cloud Trading System - Live OANDA Integration
              </p>
              <p className="mt-[13px]">Production Ready • Real-time Trading • Risk Managed</p>
            </footer>
          </main>
        </div>
        <Assistant />
      </div>
    </div>
  );
}
